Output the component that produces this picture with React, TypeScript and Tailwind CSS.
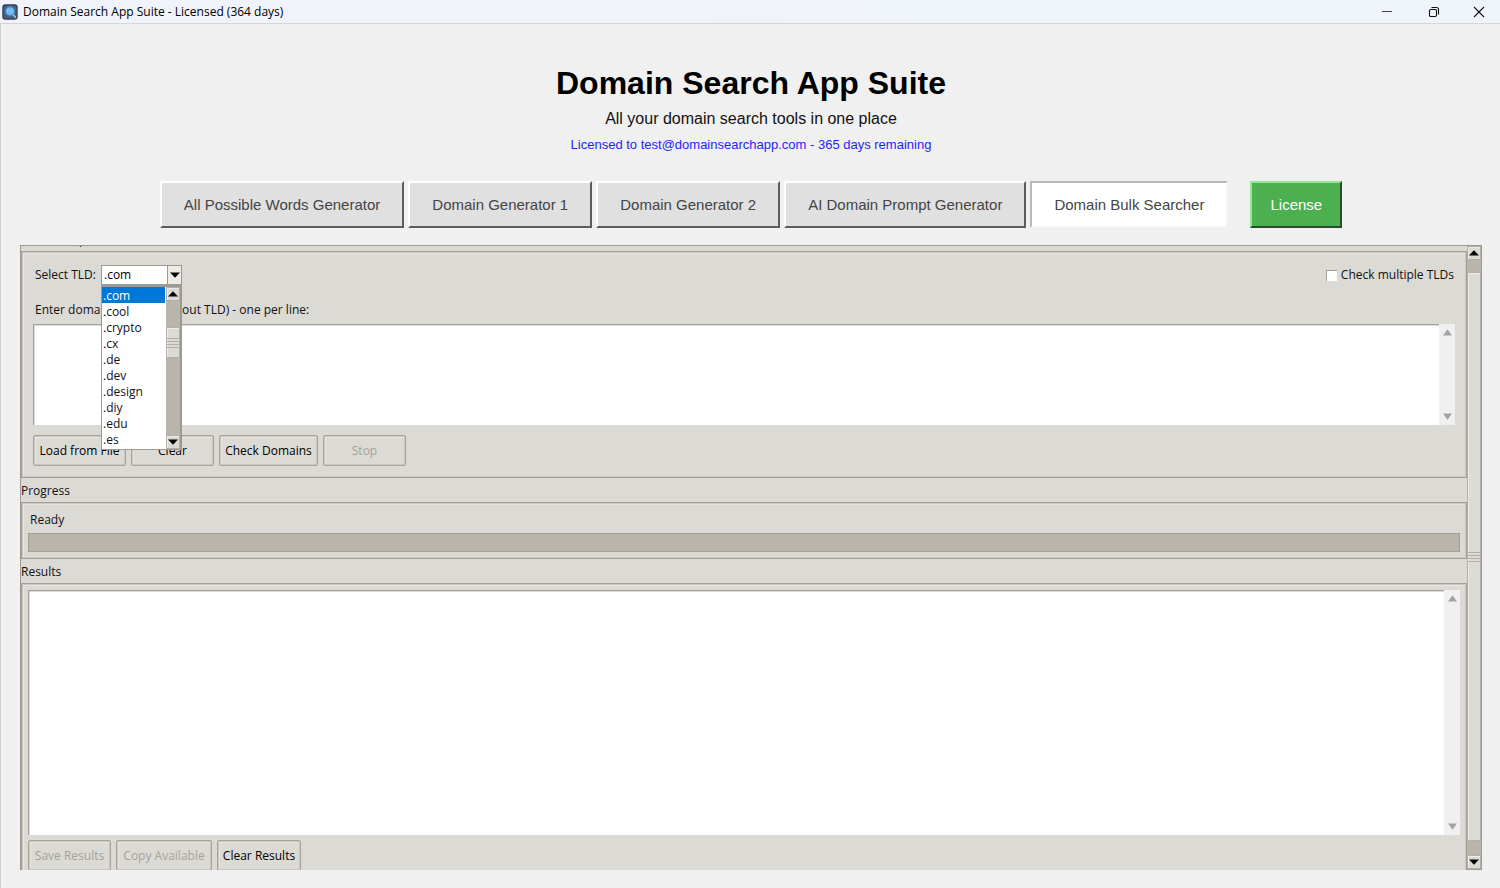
import React, { useState } from "react";

const tabs = [
  "All Possible Words Generator",
  "Domain Generator 1",
  "Domain Generator 2",
  "AI Domain Prompt Generator",
  "Domain Bulk Searcher",
];

const tlds = [".com", ".cool", ".crypto", ".cx", ".de", ".dev", ".design", ".diy", ".edu", ".es"];

function Arrow({ down = false, className = "h-[6px] w-[10px]" }: { down?: boolean; className?: string }) {
  return (
    <svg viewBox="0 0 10 6" preserveAspectRatio="none" className={`shrink-0 ${className}`} fill="currentColor" aria-hidden="true">
      <path d={down ? "M0 0.5H10L5 5.8Z" : "M0 5.5H10L5 0.2Z"} />
    </svg>
  );
}

function ClamButton({ children, disabled = false, className = "" }: { children: React.ReactNode; disabled?: boolean; className?: string }) {
  return (
    <button
      type="button"
      disabled={disabled}
      className={`h-[31px] shrink-0 rounded-[2px] border border-[#a8a49b] bg-[#dcdad5] text-center whitespace-nowrap text-black shadow-[inset_0_0_0_1px_#cbc8c1,inset_2px_2px_0_#e6e4df] disabled:text-[#a5a29b] ${className}`}
    >
      {children}
    </button>
  );
}

function ScrollButton({ down = false, label }: { down?: boolean; label: string }) {
  return (
    <button
      type="button"
      aria-label={label}
      className="flex h-[14px] w-full shrink-0 items-center justify-center border border-[#b4b0a7] bg-[#dcdad5] text-black shadow-[inset_1px_1px_0_#eeebe7]"
    >
      <Arrow down={down} />
    </button>
  );
}

function Grip() {
  return (
    <div className="flex w-full flex-col gap-[2px]">
      <div className="h-px bg-[#b4b0a7]" />
      <div className="h-px bg-[#b4b0a7]" />
      <div className="h-px bg-[#b4b0a7]" />
      <div className="h-px bg-[#b4b0a7]" />
    </div>
  );
}

function TextPane({ label, className = "" }: { label: string; className?: string }) {
  return (
    <div className={`flex ${className}`}>
      <textarea
        aria-label={label}
        className="min-w-0 flex-1 resize-none border-t border-l border-[#a3a099] bg-white p-1 shadow-[inset_1px_1px_0_#dedcd8] outline-none"
      />
      <div className="flex w-4 shrink-0 flex-col items-center justify-between bg-[#f0f0f0] py-[5px] text-[#a3a3a3]">
        <Arrow className="h-[7px] w-[9px]" />
        <Arrow down className="h-[7px] w-[9px]" />
      </div>
    </div>
  );
}

const frame = "border border-[#a3a097] shadow-[inset_0_0_0_1px_#cbc8c1,inset_2px_2px_0_#e6e4df]";

export default function App() {
  const [active, setActive] = useState("Domain Bulk Searcher");
  const [tld, setTld] = useState(".com");

  return (
    <div className="flex h-screen min-h-[600px] flex-col overflow-hidden bg-[#f0f0f0] font-['Open_Sans','Noto_Sans',sans-serif] text-xs text-[#111]">
      <header className="flex h-6 shrink-0 items-center border-b border-[#d4d7da] bg-[linear-gradient(90deg,#f0f3fa,#eef4f9)] pl-[2px]">
        <svg viewBox="0 0 16 16" className="size-4 shrink-0" aria-hidden="true">
          <rect x="0.3" y="0.3" width="15.4" height="15.4" rx="3" fill="#2f3f50" />
          <rect x="1.5" y="1.5" width="13" height="13" rx="2.5" fill="#46617d" />
          <circle cx="8" cy="7.2" r="5" fill="#3f8ccf" />
          <circle cx="8" cy="7.2" r="3.8" fill="#69b4ee" />
          <path d="M5 6.5h6M8 3.8v6.6M6 4.5c-1 2-1 4 0 5.6M10 4.5c1 2 1 4 0 5.6" stroke="#9ad0f5" strokeWidth="0.5" fill="none" />
          <path d="M11.2 10.8l2.4 2.6" stroke="#a9c4dc" strokeWidth="1.4" strokeLinecap="round" />
        </svg>
        <span className="ml-[5px] text-black">Domain Search App Suite - Licensed (364 days)</span>
        <div className="ml-auto flex h-full">
          <button type="button" aria-label="Minimize" className="flex w-[47px] items-center justify-center">
            <svg viewBox="0 0 12 12" className="size-3" stroke="#444" fill="none" aria-hidden="true"><path d="M1 5.5h10" /></svg>
          </button>
          <button type="button" aria-label="Restore" className="flex w-[47px] items-center justify-center">
            <svg viewBox="0 0 12 12" className="size-3" stroke="#111" strokeWidth="1.1" fill="none" aria-hidden="true">
              <rect x="1.5" y="3.5" width="7" height="7" rx="1.2" />
              <path d="M3.5 1.5h5a2 2 0 0 1 2 2v5" />
            </svg>
          </button>
          <button type="button" aria-label="Close" className="flex w-[43px] items-center justify-center">
            <svg viewBox="0 0 12 12" className="size-3" stroke="#111" strokeWidth="1.1" fill="none" aria-hidden="true"><path d="M1 1l10 10M11 1L1 11" /></svg>
          </button>
        </div>
      </header>

      <div className="flex min-h-0 flex-1 flex-col border-l border-[#d0d0d0] pr-[18px] pb-[18px] pl-[19px]">
        <div className="shrink-0 pt-[39px] text-center font-['Liberation_Sans',Arial,sans-serif]">
          <h1 className="text-[32px] leading-10 font-bold text-black">Domain Search App Suite</h1>
          <p className="mt-1 text-base leading-6">All your domain search tools in one place</p>
          <p className="mt-1 text-[13px] leading-5 text-[#1f1fff]">Licensed to test@domainsearchapp.com - 365 days remaining</p>
        </div>

        <nav className="mt-[26px] flex shrink-0 justify-center gap-1 font-['Liberation_Sans',Arial,sans-serif] text-[15px] text-[#444]">
          {tabs.map((t) => (
            <button
              key={t}
              type="button"
              onClick={() => setActive(t)}
              className={`h-[47px] border-2 px-[22px] whitespace-nowrap ${
                active === t
                  ? "border-t-[#b8b8b8] border-r-[#f4f4f4] border-b-[#f4f4f4] border-l-[#b8b8b8] bg-white"
                  : "border-t-white border-r-[#5c5c5c] border-b-[#5c5c5c] border-l-white bg-[#e0e0e0]"
              }`}
            >
              {t}
            </button>
          ))}
          <button type="button" className="ml-[18px] h-[47px] border-2 border-t-[#8fe693] border-r-[#2c4a2d] border-b-[#2c4a2d] border-l-[#8fe693] bg-[#4caf50] px-[18px] text-white">
            License
          </button>
        </nav>

        <main className="mt-[17px] flex min-h-0 flex-1 border-t border-[#9e9a91] bg-[#dcdad5]">
          <div className="min-w-0 flex-1 overflow-hidden border-l border-[#9e9a91]">
            <div className="flex h-[5px] items-end overflow-hidden pb-[3px] leading-4">
              <h2 className="shrink-0">Domain Input</h2>
            </div>
            <section className={`${frame} h-[227px] px-[11px] pt-[13px]`}>
              <div className="flex h-5 items-center">
                <label htmlFor="tld" className="ml-[2px] w-[66px]">Select TLD:</label>
                <div className="relative h-5 w-[81px]">
                  <select
                    id="tld"
                    value={tld}
                    onChange={(e) => setTld(e.target.value)}
                    className="block h-5 w-full appearance-none border border-[#9e9a91] bg-white pl-[2px] text-black outline-none"
                  >
                    {tlds.map((t) => <option key={t}>{t}</option>)}
                  </select>
                  <span className="pointer-events-none absolute top-px right-px flex h-[18px] w-[14px] items-center justify-center border-l border-[#9e9a91] bg-[#eeebe7] text-black">
                    <Arrow down />
                  </span>
                  <div className="absolute top-5 left-0 z-10 flex h-[165px] w-[81px] border-t-2 border-r-2 border-b border-l border-[#9e9a91] bg-white">
                    <ul role="listbox" aria-label="TLD options" className="flex-1">
                      {tlds.map((t) => (
                        <li
                          key={t}
                          role="option"
                          aria-selected={t === tld}
                          onClick={() => setTld(t)}
                          className={`mr-px h-4 pl-px leading-[18px] ${t === tld ? "bg-[#0078d7] text-white" : "text-[#111]"}`}
                        >
                          {t}
                        </li>
                      ))}
                    </ul>
                    <div className="flex w-[14px] flex-col bg-[#bab5ab]">
                      <ScrollButton label="Scroll list up" />
                      <div className="mt-[26px] flex h-[31px] items-center border border-[#b4b0a7] bg-[#dcdad5] shadow-[inset_1px_1px_0_#eeebe7]"><Grip /></div>
                      <div className="flex-1" />
                      <ScrollButton down label="Scroll list down" />
                    </div>
                  </div>
                </div>
                <label className="ml-auto flex items-center gap-1 pr-px">
                  <input type="checkbox" className="size-[11px] appearance-none border-t border-l border-[#9e9a91] bg-white checked:bg-[#555]" />
                  Check multiple TLDs
                </label>
              </div>
              <p className="mt-[17px] ml-[2px] leading-4">Enter domain names (without TLD) - one per line:</p>
              <TextPane label="Domain names" className="mt-[6px] h-[101px]" />
              <div className="mt-[10px] flex gap-[5px]">
                <ClamButton className="w-[93px]">Load from File</ClamButton>
                <ClamButton className="w-[83px]">Clear</ClamButton>
                <ClamButton className="w-[99px]">Check Domains</ClamButton>
                <ClamButton className="w-[83px]" disabled>Stop</ClamButton>
              </div>
            </section>

            <h2 className="h-6 pt-[5px] leading-4">Progress</h2>
            <section className={`${frame} h-[57px] px-[6px] pt-[9px]`}>
              <p className="ml-[2px] leading-4">Ready</p>
              <div role="progressbar" aria-valuenow={0} aria-label="Progress" className="mt-[5px] h-[19px] border border-[#a3a097] bg-[#bab5ab]" />
            </section>

            <h2 className="h-6 pt-[5px] leading-4">Results</h2>
            <section className={`${frame} h-[330px] px-[6px] pt-[6px]`}>
              <TextPane label="Results" className="h-[245px]" />
              <div className="mt-[5px] flex gap-[5px]">
                <ClamButton className="w-[83px]" disabled>Save Results</ClamButton>
                <ClamButton className="w-[96px]" disabled>Copy Available</ClamButton>
                <ClamButton className="w-[84px]">Clear Results</ClamButton>
              </div>
            </section>
          </div>

          <div className="flex w-[15px] shrink-0 flex-col border-r border-b border-[#9e9a91] bg-[#bab5ab]">
            <ScrollButton label="Scroll up" />
            <div className="mt-3 mb-[14px] flex flex-1 items-center border border-[#b4b0a7] bg-[#dcdad5] shadow-[inset_1px_1px_0_#eeebe7]"><Grip /></div>
            <ScrollButton down label="Scroll down" />
          </div>
        </main>
      </div>
    </div>
  );
}
